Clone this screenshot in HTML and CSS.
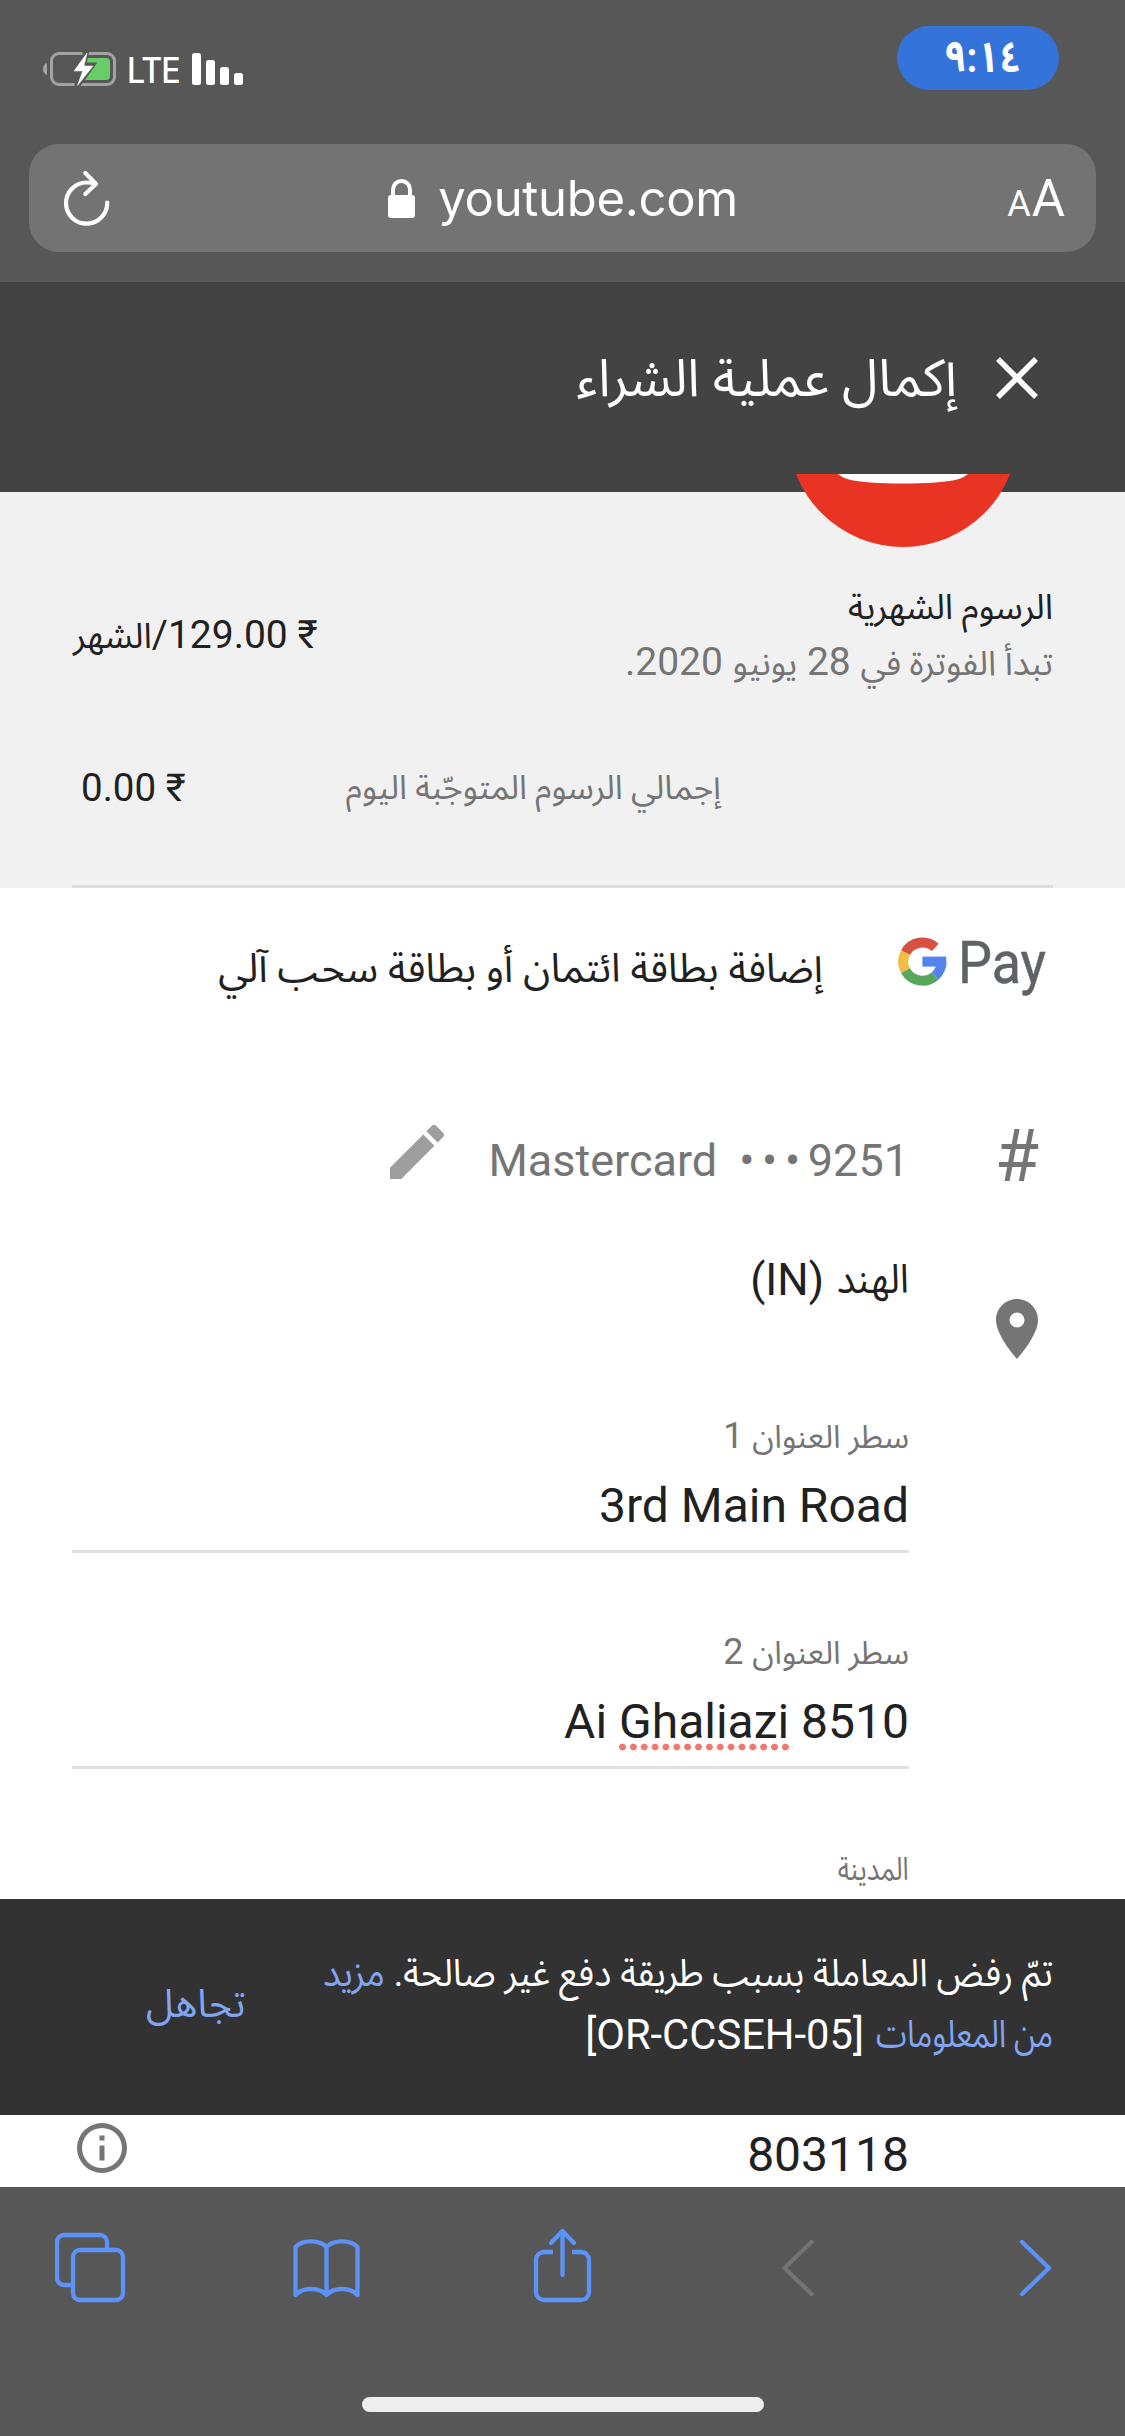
FILE: index.html
```html
<!DOCTYPE html>
<html lang="ar">
<head>
<meta charset="utf-8">
<title>إكمال عملية الشراء</title>
<link rel="stylesheet" href="styles.css">
</head>
<body>
<header class="chrome">
  <div class="status">
    <svg class="battery" viewBox="43 52 73 34" width="73" height="34">
      <path d="M47 63v12c-2.500-.8-4-3-4-6s1.500-5.200 4-6z" fill="#a3a3a3"/>
      <rect x="51.500" y="53.500" width="63" height="31" rx="7.500" fill="none" stroke="#a3a3a3" stroke-width="3"/>
      <rect x="70" y="58" width="40" height="22" rx="4" fill="#67ce67"/>
      <path d="M66 50h23.500l-2.700 12.500h10.500L85 80 79.500 87H66z" fill="#575757"/>
      <path d="M60 53.500h22.500M60 84.500h14.500" stroke="#a3a3a3" stroke-width="3"/>
      <path d="M87 53L74 71h8.700L77.500 85.500 93 66h-9z" fill="#fff" stroke="#fff" stroke-width=".5"/>
    </svg>
    <span class="carrier">LTE</span>
    <svg class="signal" viewBox="0 0 51 32" width="51" height="32" fill="#fff">
      <rect x="0" y="0" width="9" height="32" rx="2.500"/><rect x="14" y="7" width="9" height="25" rx="2.500"/><rect x="28" y="14" width="9" height="18" rx="2.500"/><rect x="42" y="20" width="9" height="12" rx="2.500"/>
    </svg>
    <span class="clock"><span>٩:١٤</span></span>
  </div>
  <div class="urlbar">
    <svg class="reload" viewBox="62 168 50 60" width="50" height="60" fill="none" stroke="#fff" stroke-width="4.200" stroke-linecap="round" stroke-linejoin="round">
      <path d="M107.200 202.500A20.600 20.600 0 1 1 86.500 182.500Q91 182.500 95.500 184M85.300 173L96 184 85.300 194"/>
    </svg>
    <div class="site">
      <svg class="lock" viewBox="0 0 27 39" width="27" height="39">
        <rect x="0" y="16" width="27" height="23" rx="3" fill="#fff"/>
        <path d="M5 18V10.500a8.500 8.500 0 0 1 17 0V18" fill="none" stroke="#fff" stroke-width="4"/>
      </svg>
      <span>youtube.com</span>
    </div>
    <div class="textsize"><small>A</small><span>A</span></div>
  </div>
</header>

<main dir="rtl">
  <div class="titlebar">
    <svg class="close" viewBox="0 0 42 42" width="42" height="42" stroke="#fff" stroke-width="5.500"><path d="M2 2l38 38M40 2L2 40"/></svg>
    <h1>إكمال عملية الشراء</h1>
  </div>

  <section class="summary">
    <svg class="logo" viewBox="-115 42 230 73" width="230" height="73">
      <circle r="115" fill="#e93423"/>
      <path d="M-65 42C-58 48-48 51 0 51.500 48 51 58 48 65 42z" fill="#fff"/>
    </svg>
    <div class="fee">
      <div>
        <div class="fee-title"><span class="ar35">الرسوم الشهرية</span></div>
        <div class="fee-note"><span class="ar34">تبدأ الفوترة في</span> 28 <span class="ar34">يونيو</span> 2020.</div>
      </div>
      <div class="price"><bdi dir="rtl">₹ 129.00/<span class="ar35">الشهر</span></bdi></div>
    </div>
    <div class="total">
      <div class="total-label">إجمالي الرسوم المتوجّبة اليوم</div>
      <div class="total-price">₹ 0.00</div>
    </div>
    <div class="rule"></div>
  </section>

  <section class="form">
    <div class="gpay">
      <svg viewBox="0 0 148 60" width="148" height="60" direction="ltr">
        <g fill="none" stroke-width="10" transform="translate(24.400 23.600)">
          <path stroke="#d8503f" d="M12.900-14.200A19.200 19.200 0 0 0-16.900-9"/>
          <path stroke="#f2bd42" d="M-16.900-9A19.200 19.200 0 0 0-16.900 9"/>
          <path stroke="#58a55c" d="M-16.900 9A19.200 19.200 0 0 0 12.700 14.300"/>
          <path stroke="#5383ec" d="M12.700 14.300A18.800 18.800 0 0 0 19 0"/>
          <path stroke="#5383ec" d="M0 0H23.800"/>
        </g>
        <text x="60" y="44.500" class="pay" textLength="88" lengthAdjust="spacingAndGlyphs">Pay</text>
      </svg>
      <div class="gpay-text">إضافة بطاقة ائتمان أو بطاقة سحب آلي</div>
    </div>

    <div class="row card">
      <div class="glyph hash">#</div>
      <div class="card-number" dir="ltr"><span>Mastercard</span><span><span class="dots">•••</span>9251</span></div>
      <svg class="pencil" viewBox="0 0 24 24" width="72" height="72" fill="#9e9e9e"><path d="M3 17.250V21h3.750L17.810 9.940l-3.750-3.750L3 17.250zM20.710 7.040a1 1 0 0 0 0-1.410l-2.340-2.340a1 1 0 0 0-1.410 0l-1.830 1.830 3.750 3.750 1.830-1.830z"/></svg>
    </div>

    <div class="row address">
      <svg class="glyph pin" viewBox="0 0 24 24" width="72" height="72" fill="#757575"><path d="M12 2C8.130 2 5 5.130 5 9c0 5.250 7 13 7 13s7-7.750 7-13c0-3.870-3.130-7-7-7zm0 9.500a2.500 2.500 0 0 1 0-5 2.500 2.500 0 0 1 0 5z"/></svg>
      <div class="fields">
        <div class="country"><span class="fit india">الهند</span> <bdi>(IN)</bdi></div>
        <div class="field"><div class="label"><span class="ar32">سطر العنوان</span> 1</div><div class="value" dir="ltr">3rd Main Road</div></div>
        <div class="field"><div class="label"><span class="ar32">سطر العنوان</span> 2</div><div class="value" dir="ltr">Ai <span class="misspelt">Ghaliazi</span> 8510</div></div>
        <div class="field"><div class="label"><span class="fit city">المدينة</span></div></div>
      </div>
    </div>
  </section>

  <aside class="snackbar">
    <div class="message">
      <div class="line"><span class="fit line-one">تمّ رفض المعاملة بسبب طريقة دفع غير صالحة. <a>مزيد</a></span></div>
      <div class="line"><a class="fit line-two">من المعلومات</a> <bdi>[OR-CCSEH-05]</bdi></div>
    </div>
    <a class="dismiss">تجاهل</a>
  </aside>

  <div class="postal">
    <div class="value">803118</div>
    <svg viewBox="0 0 24 24" width="60" height="60" fill="#757575"><path d="M11 7h2v2h-2zm0 4h2v6h-2zm1-9a10 10 0 1 0 0 20 10 10 0 0 0 0-20zm0 18a8 8 0 1 1 0-16 8 8 0 0 1 0 16z"/></svg>
  </div>
</main>

<footer class="toolbar">
  <nav>
    <svg viewBox="55 2222 71 90"><path d="M107 2248v-6a7 7 0 0 0-7-7H64a7 7 0 0 0-7 7v36a7 7 0 0 0 7 7h7"/><rect x="73" y="2250" width="50" height="50" rx="7"/></svg>
    <svg viewBox="290.500 2222 71 90"><path d="M326 2247c-7-7.500-24-7.500-31 0v48c7-8 24-8 31 0 7-8 24-8 31 0v-48c-7-7.500-24-7.500-31 0v48"/></svg>
    <svg viewBox="527 2222 71 90"><path d="M553 2252h-9a8 8 0 0 0-8 8v32a8 8 0 0 0 8 8h37a8 8 0 0 0 8-8v-32a8 8 0 0 0-8-8h-9"/><path d="M562.500 2275v-43M551 2243l11.500-12 11.500 12" stroke-linecap="round"/></svg>
    <svg viewBox="763.500 2222 71 90" class="off"><path d="M812 2242l-27 26 27 26" stroke-linecap="round"/></svg>
    <svg viewBox="999 2222 71 90"><path d="M1022 2242l27 26-27 26" stroke-linecap="round"/></svg>
  </nav>
  <div class="home"></div>
</footer>
</body>
</html>
```
FILE: styles.css
```css
* { box-sizing: border-box; margin: 0; padding: 0; }

body {
  width: 1125px;
  height: 2436px;
  overflow: hidden;
  background: #fff;
  color: #212121;
  font-family: Roboto, "Noto Sans Arabic", "DejaVu Sans", sans-serif;
  white-space: nowrap;
}

svg { display: block; flex: none; }

/* Browser chrome, top */
.chrome { height: 282px; background: #575757; color: #fff; font-family: Inter, sans-serif; }
.status { display: flex; align-items: flex-start; height: 144px; padding: 26px 66px 0 43px; }
.battery { margin-top: 26px; }
.signal { margin: 27px 0 0 10px; }
.carrier { width: 55px; margin: 24px 0 0 11px; font-size: 35px; font-weight: 500; line-height: 40px; letter-spacing: -1px; transform: scaleX(.92); transform-origin: 0 50%; }
.clock {
  display: flex;
  justify-content: center;
  width: 162px;
  height: 64px;
  margin-left: auto;
  padding-left: 10px;
  border-radius: 32px;
  background: #3373da;
  font: bold 43px/63px Roboto, "Noto Sans Arabic", sans-serif;
}
.clock span { transform: scaleX(.9); }
.urlbar {
  display: flex;
  justify-content: space-between;
  align-items: center;
  height: 108px;
  margin: 0 29px;
  padding: 0 31px 0 33px;
  border-radius: 30px;
  background: #737373;
}
.site { display: flex; align-items: center; gap: 23px; margin-left: 7px; font-size: 49px; line-height: 60px; }
.site span { margin-top: 1px; letter-spacing: -.3px; }
.textsize { display: flex; align-items: baseline; gap: 1px; margin-top: 6px; font: 51px/60px Roboto, sans-serif; }
.textsize small { font-size: 36px; }

/* Page title */
.titlebar { display: flex; align-items: flex-start; height: 210px; padding: 0 87px 0 0; background: #434343; color: #fff; }
.close { margin-top: 75px; }
.titlebar h1 { margin: 67px 39px 0 0; font-size: 52px; font-weight: 400; line-height: 60px; }

/* Order summary */
.summary { position: relative; display: flex; flex-direction: column; height: 396px; padding: 86px 72px 0; background: #f1f1f1; font-size: 39px; line-height: 56px; }
.logo { position: absolute; left: 788px; top: -18px; }
.fee { display: flex; justify-content: space-between; align-items: center; }
.fee-note, .total-label { color: #757575; }
.price { margin: 2px 0 0 1px; }
.total { display: flex; justify-content: space-between; margin-top: 70px; padding: 0 332px 0 9px; }
.total-label { font-size: 33.500px; }
.total-price { font-size: 38.500px; }
.rule { height: 3px; margin-top: auto; background: #dedede; }
.ar35, .ar34, .ar32 { line-height: 0; }
.ar35 { font-size: 35px; }
.ar34 { font-size: 34.300px; }
.ar32 { font-size: 32px; }

/* Text drawn narrower than its natural width, anchored to its right edge */
.fit { display: inline-block; transform-origin: 100% 50%; }

/* Payment form */
.form { height: 1011px; padding: 50px 72px 0; overflow: hidden; }
.gpay { display: flex; height: 60px; padding-right: 7px; }
.gpay svg { overflow: visible; }
.gpay-text { margin-right: 75px; font-size: 40px; line-height: 61px; }
.pay { font: 59px Roboto, sans-serif; fill: #5f6368; stroke: #5f6368; stroke-width: .5px; }
.row { display: flex; align-items: flex-start; }
.glyph { width: 72px; margin-left: 72px; flex: none; }
.card { height: 60px; margin-top: 132px; color: #757575; }
.hash { font-size: 72px; line-height: 54px; text-align: center; }
.card-number { display: flex; gap: 22px; font-size: 45px; line-height: 61px; }
.dots { letter-spacing: 7.700px; }
.pencil { margin: -14px 36px 0 0; }
.address { margin-top: 60px; }
.pin { margin-top: 43px; }
.fields { flex: 1; }
.country { display: flex; gap: 14px; margin-bottom: 101px; font-size: 44px; line-height: 60px; }
.india { width: 71px; font-size: 40px; transform: scaleX(.96); }
.field { margin-bottom: 74px; border-bottom: 3px solid #e0e0e0; padding-bottom: 14px; }
.label { margin-bottom: 15px; color: #757575; font-size: 36px; line-height: 50px; }
.value { color: #212121; font-size: 48px; line-height: 60px; text-align: right; }
.city { font-size: 32px; transform: scaleX(.81); }
.misspelt { position: relative; }
.misspelt::after {
  content: "";
  position: absolute;
  left: 0;
  bottom: -1px;
  width: 174px;
  height: 8px;
  background: radial-gradient(circle at 3.500px 4px, #ef776c 3px, transparent 3.800px) 0 0 / 10.860px 8px repeat-x;
}

/* Error message */
.snackbar { display: flex; justify-content: space-between; height: 216px; padding: 44px 72px 0 146px; background: #323232; color: #fff; font-size: 42px; line-height: 61px; }
.snackbar a { color: #82a5f2; }
.line { display: flex; gap: 12px; height: 61px; }
.line-one { width: 729px; font-size: 38px; transform: scaleX(.944); }
.line-two { width: 177px; font-size: 38px; transform: scaleX(.82); }
.line bdi { font-size: 41.700px; }
.dismiss { margin-top: 31px; font-size: 39.300px; line-height: 60px; }

/* Postal code */
.postal { display: flex; justify-content: space-between; align-items: flex-start; height: 72px; padding: 3px 216px 0 72px; }
.postal .value { margin-top: 7px; }

/* Browser chrome, bottom */
.toolbar { height: 249px; padding-top: 35px; background: #575757; }
.toolbar nav { display: flex; justify-content: space-between; padding: 0 55px; }
.toolbar svg { width: 71px; height: 90px; fill: none; stroke: #5b93f8; stroke-width: 4.300; stroke-linejoin: round; }
.toolbar .off { stroke: #737373; }
.home { width: 402px; height: 15px; margin: 85px auto 0; border-radius: 8px; background: #eee; }
```
